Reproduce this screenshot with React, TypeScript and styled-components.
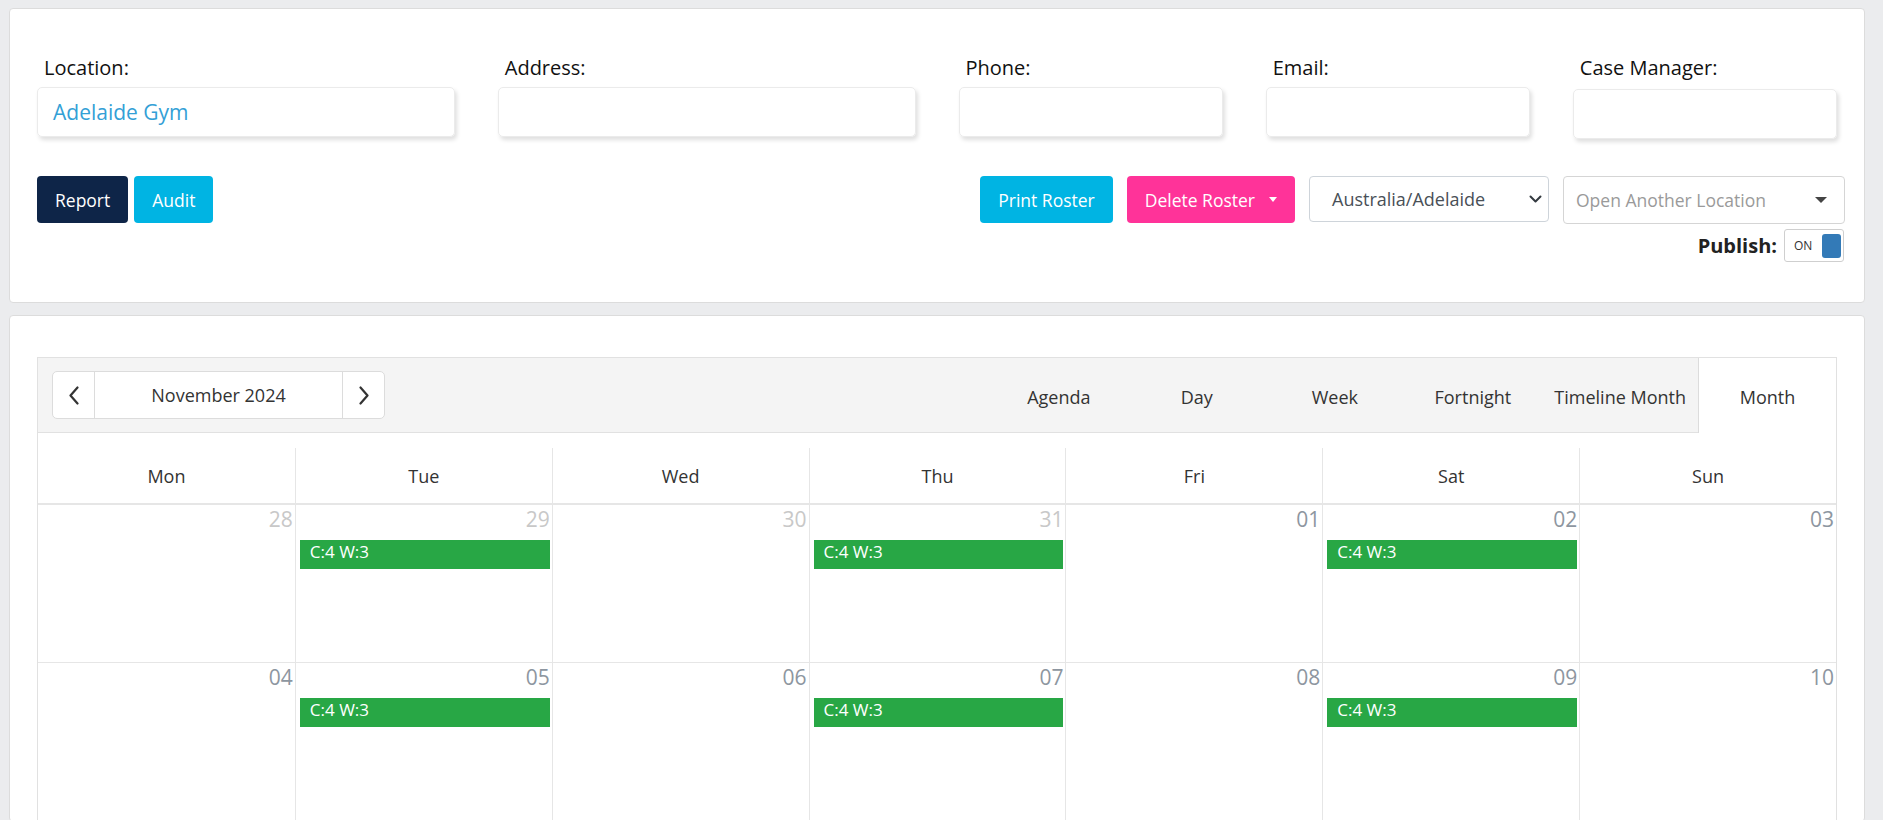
import React from 'react';
import styled, { createGlobalStyle } from 'styled-components';

const GlobalStyle = createGlobalStyle`
  html, body { margin: 0; padding: 0; overflow: hidden; background: #ebecee; }
  body { font-family: "Open Sans", "Noto Sans", sans-serif; color: #333; }
  * { box-sizing: border-box; }
`;

const Page = styled.div`
  padding: 8px 18px 0 9px;
  display: flex;
  flex-direction: column;
  gap: 12px;
`;

const Panel = styled.section<{ $pad: string }>`
  background: #fff;
  border: 1px solid #dcdcdc;
  border-radius: 4px;
  padding: ${(p) => p.$pad};
`;

const FieldRow = styled.div`
  display: flex;
  margin: 0 -21.5px;
`;

const Field = styled.div<{ $span: number }>`
  flex: 0 0 ${(p) => (p.$span / 12) * 100}%;
  padding: 0 21.5px;
`;

const FieldLabel = styled.label<{ $gap?: number }>`
  display: block;
  padding-left: 7px;
  font-size: 20px;
  line-height: 30px;
  color: #111;
  margin-bottom: ${(p) => p.$gap ?? 4}px;
`;

const TextBox = styled.div`
  height: 50px;
  border: 1px solid #ebebeb;
  border-radius: 5px;
  box-shadow: 2px 3px 4px rgba(0, 0, 0, 0.13);
  padding: 0 15px;
  display: flex;
  align-items: center;
  font-size: 21px;
  color: #33a0d6;
`;

const ActionRow = styled.div`
  display: flex;
  justify-content: space-between;
  align-items: flex-start;
  margin-top: 37px;
  margin-right: -8px;
`;

const ButtonGroup = styled.div`
  display: flex;
  gap: 6px;
`;

const tones = {
  navy: '#0e2548',
  cyan: '#00b4e3',
  pink: '#ff3399',
};

const Btn = styled.button<{ $tone: keyof typeof tones }>`
  height: 47px;
  padding: 0 18px;
  border: none;
  border-radius: 4px;
  font-family: inherit;
  font-size: 17.5px;
  color: #fff;
  background: ${(p) => tones[p.$tone]};
  display: inline-flex;
  align-items: center;
  gap: 14px;
  cursor: pointer;
`;

const Caret = styled.span<{ $color: string; $w: number }>`
  width: 0;
  height: 0;
  border-left: ${(p) => p.$w / 2}px solid transparent;
  border-right: ${(p) => p.$w / 2}px solid transparent;
  border-top: ${(p) => Math.round(p.$w / 2)}px solid ${(p) => p.$color};
`;

const RightTools = styled.div`
  display: flex;
  flex-direction: column;
  align-items: flex-end;
  gap: 5px;
`;

const ToolRow = styled.div`
  display: flex;
  gap: 14px;
  align-items: flex-start;
`;

const SelectBox = styled.div`
  width: 240px;
  height: 46px;
  border: 1px solid #ced4da;
  border-radius: 4px;
  padding: 0 6px 0 22px;
  display: flex;
  align-items: center;
  justify-content: space-between;
  font-size: 18px;
  color: #495057;
`;

const LocationPicker = styled.div`
  width: 282px;
  height: 48px;
  border: 1px solid #d5d5d5;
  border-radius: 4px;
  padding: 0 17px 0 12px;
  display: flex;
  align-items: center;
  justify-content: space-between;
  font-size: 17.5px;
  color: #9a9a9a;
`;

const PublishRow = styled.div`
  display: flex;
  align-items: center;
  gap: 7px;
  margin-right: 1px;
`;

const PublishLabel = styled.span`
  font-weight: 700;
  font-size: 20px;
  color: #222;
`;

const Toggle = styled.div`
  width: 60px;
  height: 33px;
  border: 1px solid #cfcfcf;
  border-radius: 3px;
  display: flex;
  align-items: center;
  justify-content: space-between;
  padding: 0 2px 0 9px;
  background: #fff;
`;

const ToggleText = styled.span`
  font-size: 12px;
  color: #333;
`;

const Knob = styled.span`
  width: 19px;
  height: 24px;
  border-radius: 3px;
  background: #337ab7;
`;

const Calendar = styled.div`
  border-left: 1px solid #e1e1e1;
  border-right: 1px solid #e1e1e1;
`;

const Toolbar = styled.div`
  height: 76px;
  display: flex;
  align-items: center;
  justify-content: space-between;
  background: #f4f4f4;
  border-top: 1px solid #e1e1e1;
  border-bottom: 1px solid #e1e1e1;
  padding-left: 14px;
`;

const NavGroup = styled.div`
  display: flex;
  height: 48px;
  border: 1px solid #dcdcdc;
  border-radius: 5px;
  background: #fff;
`;

const NavArrow = styled.div`
  width: 41px;
  display: flex;
  align-items: center;
  justify-content: center;
`;

const NavTitle = styled.div`
  width: 249px;
  border-left: 1px solid #dcdcdc;
  border-right: 1px solid #dcdcdc;
  display: flex;
  align-items: center;
  justify-content: center;
  font-size: 18px;
  color: #333;
`;

const ViewTabs = styled.div`
  display: flex;
  align-self: stretch;
  margin-bottom: -1px;
`;

const Tab = styled.div<{ $active?: boolean }>`
  min-width: 138px;
  padding: 2px 12px 0;
  display: flex;
  align-items: center;
  justify-content: center;
  font-size: 18px;
  color: #333;
  white-space: nowrap;
  background: ${(p) => (p.$active ? '#fff' : 'transparent')};
  border-left: 1px solid ${(p) => (p.$active ? '#dcdcdc' : 'transparent')};
`;

const HeaderRow = styled.div`
  margin-top: 15px;
  display: grid;
  grid-template-columns: repeat(7, 1fr);
  border-bottom: 2px solid #e6e6e6;
`;

const HeaderCell = styled.div`
  height: 55px;
  display: flex;
  align-items: center;
  justify-content: center;
  font-size: 18px;
  color: #333;
  border-left: 1px solid #e6e6e6;
  &:first-child { border-left: none; }
`;

const WeekRow = styled.div`
  display: grid;
  grid-template-columns: repeat(7, 1fr);
  height: 158px;
  border-bottom: 1px solid #e6e6e6;
`;

const DayCell = styled.div`
  border-left: 1px solid #e6e6e6;
  padding: 2px 2px 0 4px;
  &:first-child { border-left: none; }
`;

const DayNum = styled.div<{ $muted?: boolean }>`
  text-align: right;
  font-size: 21px;
  line-height: 25px;
  color: ${(p) => (p.$muted ? '#c8c8c8' : '#8d96a0')};
`;

const EventBar = styled.div`
  margin-top: 8px;
  height: 29px;
  background: #28a745;
  color: #fff;
  font-size: 17px;
  line-height: 24px;
  padding: 0 10px 5px;
  white-space: nowrap;
`;

const ChevronLeft = () => (
  <svg width="12" height="19" viewBox="0 0 12 19" fill="none">
    <polyline points="9.5,1.5 2.5,9.5 9.5,17.5" stroke="#333" strokeWidth="2.2" strokeLinecap="round" strokeLinejoin="round" />
  </svg>
);

const ChevronRight = () => (
  <svg width="12" height="19" viewBox="0 0 12 19" fill="none">
    <polyline points="2.5,1.5 9.5,9.5 2.5,17.5" stroke="#333" strokeWidth="2.2" strokeLinecap="round" strokeLinejoin="round" />
  </svg>
);

const ChevronDown = () => (
  <svg width="13" height="8" viewBox="0 0 13 8" fill="none">
    <polyline points="1.5,1.5 6.5,6.5 11.5,1.5" stroke="#343a40" strokeWidth="2" strokeLinecap="round" strokeLinejoin="round" />
  </svg>
);

const fields = [
  { label: 'Location:', span: 3, value: 'Adelaide Gym' },
  { label: 'Address:', span: 3, value: '' },
  { label: 'Phone:', span: 2, value: '' },
  { label: 'Email:', span: 2, value: '' },
  { label: 'Case Manager:', span: 2, value: '', gap: 6 },
];

const days = ['Mon', 'Tue', 'Wed', 'Thu', 'Fri', 'Sat', 'Sun'];

type Day = { n: string; muted?: boolean; event?: boolean };

const weeks: Day[][] = [
  ['28', '29', '30', '31', '01', '02', '03'],
  ['04', '05', '06', '07', '08', '09', '10'],
].map((w, wi) =>
  w.map((n, di) => ({
    n,
    muted: wi === 0 && di < 4,
    event: di === 1 || di === 3 || di === 5,
  }))
);

const views = ['Agenda', 'Day', 'Week', 'Fortnight', 'Timeline Month', 'Month'];

export default function App() {
  return (
    <>
      <GlobalStyle />
      <Page>
        <Panel $pad="44px 27px 40px">
          <FieldRow>
            {fields.map((f) => (
              <Field key={f.label} $span={f.span}>
                <FieldLabel $gap={f.gap}>{f.label}</FieldLabel>
                <TextBox>{f.value}</TextBox>
              </Field>
            ))}
          </FieldRow>
          <ActionRow>
            <ButtonGroup>
              <Btn $tone="navy">Report</Btn>
              <Btn $tone="cyan">Audit</Btn>
            </ButtonGroup>
            <RightTools>
              <ToolRow>
                <Btn $tone="cyan">Print Roster</Btn>
                <Btn $tone="pink">
                  Delete Roster
                  <Caret $color="#fff" $w={9} />
                </Btn>
                <SelectBox>
                  <span>Australia/Adelaide</span>
                  <ChevronDown />
                </SelectBox>
                <LocationPicker>
                  <span>Open Another Location</span>
                  <Caret $color="#444" $w={12} />
                </LocationPicker>
              </ToolRow>
              <PublishRow>
                <PublishLabel>Publish:</PublishLabel>
                <Toggle>
                  <ToggleText>ON</ToggleText>
                  <Knob />
                </Toggle>
              </PublishRow>
            </RightTools>
          </ActionRow>
        </Panel>
        <Panel $pad="41px 27px 0">
          <Calendar>
            <Toolbar>
              <NavGroup>
                <NavArrow>
                  <ChevronLeft />
                </NavArrow>
                <NavTitle>November 2024</NavTitle>
                <NavArrow>
                  <ChevronRight />
                </NavArrow>
              </NavGroup>
              <ViewTabs>
                {views.map((v) => (
                  <Tab key={v} $active={v === 'Month'}>
                    {v}
                  </Tab>
                ))}
              </ViewTabs>
            </Toolbar>
            <HeaderRow>
              {days.map((d) => (
                <HeaderCell key={d}>{d}</HeaderCell>
              ))}
            </HeaderRow>
            {weeks.map((w, i) => (
              <WeekRow key={i}>
                {w.map((d) => (
                  <DayCell key={d.n}>
                    <DayNum $muted={d.muted}>{d.n}</DayNum>
                    {d.event && <EventBar>C:4 W:3</EventBar>}
                  </DayCell>
                ))}
              </WeekRow>
            ))}
          </Calendar>
        </Panel>
      </Page>
    </>
  );
}
